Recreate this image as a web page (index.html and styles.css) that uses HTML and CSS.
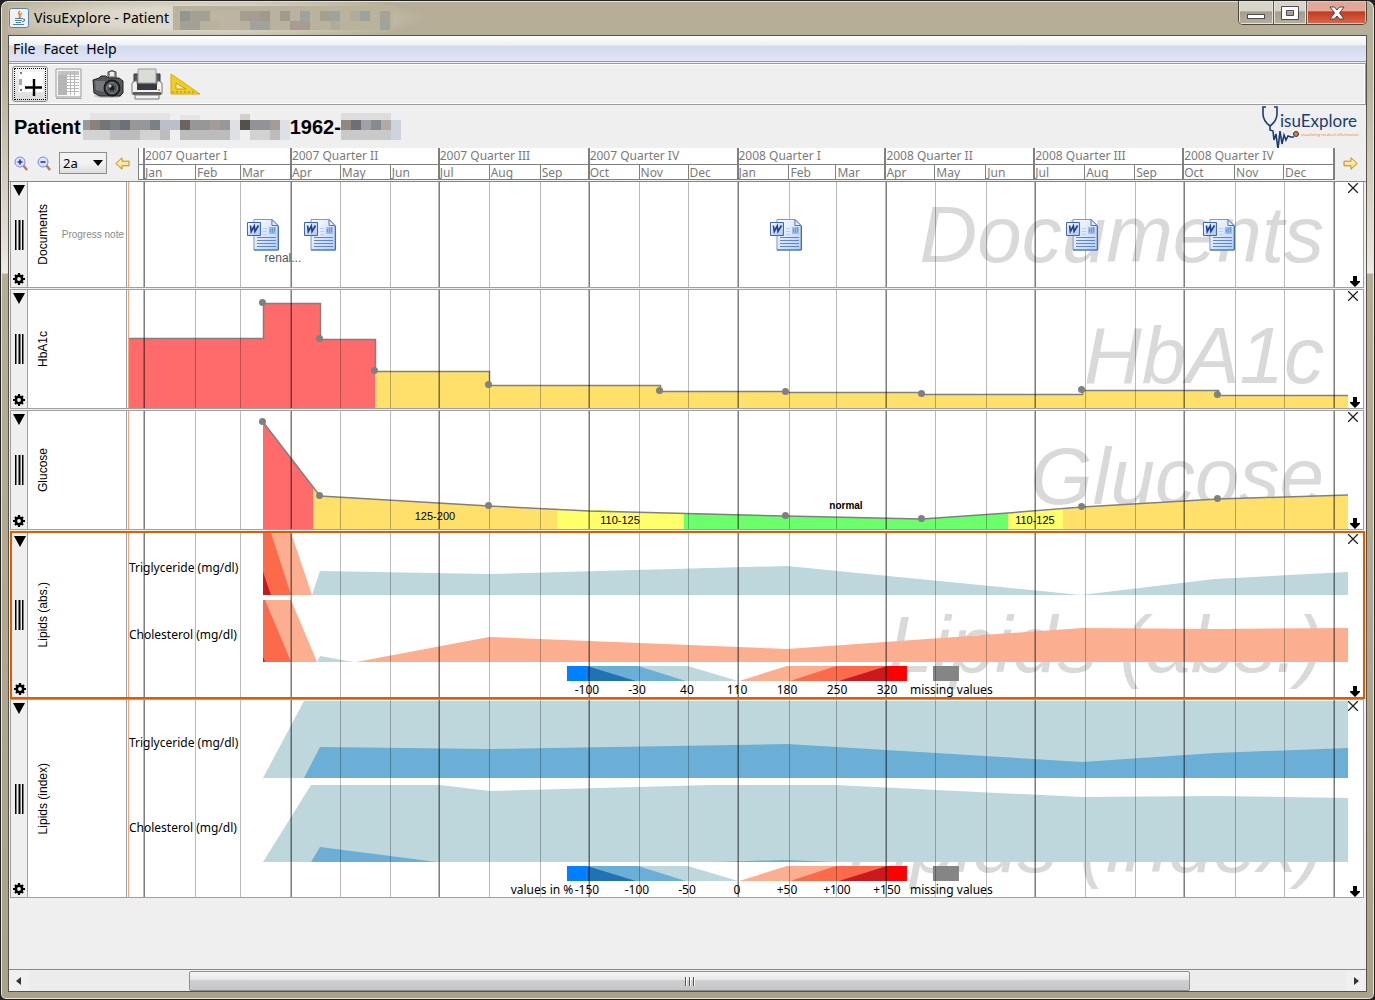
FILE: index.html
```html
<!DOCTYPE html>
<html lang="en">
<head>
<meta charset="utf-8">
<title>VisuExplore - Patient</title>
<link rel="stylesheet" href="styles.css">
</head>
<body>
<svg class="defs" aria-hidden="true">
  <defs>
    <linearGradient id="paper" x1="0" y1="0" x2="1" y2="1"><stop offset="0" stop-color="#fff"/><stop offset="1" stop-color="#b4cdf5"/></linearGradient>
    <linearGradient id="blueBox" x1="0" y1="0" x2="1" y2="1"><stop offset="0" stop-color="#fff"/><stop offset="1" stop-color="#a9c2f3"/></linearGradient>
    <linearGradient id="gold" x1="0" y1="0" x2="0" y2="1"><stop offset="0" stop-color="#fff6cf"/><stop offset="1" stop-color="#ffd86a"/></linearGradient>
    <g id="months" fill="#000">
      <path fill="#f4a77c" d="M128 0h1v1000h-1z"/>
      <path fill-opacity=".27" d="M195 0h1v1000h-1zM240 0h1v1000h-1zM340 0h1v1000h-1zM390 0h1v1000h-1zM489 0h1v1000h-1zM540 0h1v1000h-1zM639 0h1v1000h-1zM688 0h1v1000h-1zM789 0h1v1000h-1zM836 0h1v1000h-1zM935 0h1v1000h-1zM986 0h1v1000h-1zM1085 0h1v1000h-1zM1135 0h1v1000h-1zM1235 0h1v1000h-1zM1284 0h1v1000h-1zM143 0h1v1000h-1zM290 0h1v1000h-1zM438 0h1v1000h-1zM588 0h1v1000h-1zM737 0h1v1000h-1zM885 0h1v1000h-1zM1034 0h1v1000h-1zM1183 0h1v1000h-1zM1333 0h1v1000h-1z"/>
      <path fill-opacity=".5" d="M144 0h1v1000h-1zM291 0h1v1000h-1zM439 0h1v1000h-1zM589 0h1v1000h-1zM738 0h1v1000h-1zM886 0h1v1000h-1zM1035 0h1v1000h-1zM1184 0h1v1000h-1zM1334 0h1v1000h-1z"/>
    </g>
    <g id="worddoc">
      <path d="M7 .5h18l6 6v24.500H7z" fill="url(#paper)" stroke="#7d98cf"/>
      <path d="M25 .5v6h6z" fill="#e8f0ff" stroke="#4f73b8"/>
      <path d="M31.500 7v24H7" fill="none" stroke="#3f69b0"/>
      <path d="M10 18.500h19M10 21.500h19M10 24.500h19M10 27.500h19" stroke="#5f86cc"/>
      <path d="M16 9.500h4M16 12.500h4M16 15.500h4" stroke="#b9cdf0"/>
      <path d="M22 8h7v7h-7z" fill="#9dbbea"/><path d="M23.500 10v3M25.500 9v5M27.500 8v5" stroke="#6d95d6"/>
      <path d="M.5 3.500h13v13H.5z" fill="url(#blueBox)" stroke="#3a62c0"/>
      <path d="M3.500 6.500l.8 6L7.300 7l.7 5.500L11.500 6.500" fill="none" stroke="#1f4396" stroke-width="1.700"/>
    </g>
    <g id="legend">
      <path fill="#bdd7dc" d="M20 0h101l50 15H20z"/>
      <path fill="#6baed6" d="M20 0h51l48 15H20z"/>
      <path fill="#2171b5" d="M20 0l49 15H20z"/>
      <path fill="#0080ff" d="M0 0h20v15H0z"/>
      <path fill="#fcae91" d="M320 0H220l-48 15h148z"/>
      <path fill="#fb6a4a" d="M320 0h-51l-46 15h97z"/>
      <path fill="#cb181d" d="M320 0l-48 15h48z"/>
      <path fill="#f00" d="M320 0h20v15h-20z"/>
      <path fill="#858585" d="M366 0h26v15h-26z"/>
      <text x="343" y="28">missing values</text>
    </g>
    <symbol id="i-fold" viewBox="0 0 12 12"><path d="M0 1h12L6 12z"/></symbol>
    <symbol id="i-gear" viewBox="0 0 12 12"><circle cx="6" cy="6" r="3.200" fill="none" stroke="#000" stroke-width="2.600"/><path d="M6 0v3M6 9v3M0 6h3M9 6h3M2 2l2 2M10 2L8 4M2 10l2-2M10 10L8 8" stroke="#000" stroke-width="2.200"/></symbol>
    <symbol id="i-close" viewBox="0 0 10 10"><path d="M0 0l10 10M10 0L0 10" fill="none" stroke="#222" stroke-width="1.300"/></symbol>
    <symbol id="i-down" viewBox="0 0 12 12"><path d="M4 1h4v5h3v1L6 12 1 7V6h3z"/></symbol>
  </defs>
</svg>

<div class="window">
  <header class="titlebar">
    <svg class="java" width="20" height="20" viewBox="0 0 20 20" aria-hidden="true">
      <rect x=".5" y=".5" width="19" height="19" rx="2" fill="#eef2f5" stroke="#5f82a3"/>
      <path d="M11 3c-4 3 2 4-1 7M13 5c-3 2-2 2-2 5" fill="none" stroke="#e8762c" stroke-width="1.400"/>
      <path d="M6 10.500h8M6 12.500h7M7 14.500h5M4 16.500h11M14 11c3 0 1 3-1 3" fill="none" stroke="#5382a1" stroke-width="1.200"/>
    </svg>
    <h1>VisuExplore - Patient</h1>
    <svg class="mask" width="220" height="24" viewBox="0 0 220 24" aria-hidden="true">
      <path fill="#b9b29c" d="M0 0h220v24H0z"/>
      <path fill="#8f9790" d="M7 5h10v10H7z"/><path fill="#a5a096" d="M17 5h20v10H17zM7 15h20v9H7z"/><path fill="#bdb4a2" d="M37 5h30v10H37zM47 15h20v9H47z"/>
      <path fill="#a89c92" d="M67 5h20v10H67zM117 15h20v9h-20z"/><path fill="#a09a8a" d="M87 5h10v10H87zM107 5h10v10h-10z"/><path fill="#9ea39c" d="M127 5h10v10h-10zM157 5h10v10h-10zM77 15h20v9H77z"/>
      <path fill="#a3a18c" d="M147 5h10v10h-10z"/><path fill="#b2ab97" d="M177 5h20v10h-20zM157 15h10v9h-10z"/><path fill="#9ba59e" d="M187 5h10v10h-10zM207 15h10v9h-10z"/><path fill="#a6a294" d="M207 5h10v10h-10z"/>
    </svg>
    <div class="winbtns">
      <button class="wb" aria-label="Minimize"><svg width="18" height="6"><rect x=".5" y=".5" width="17" height="4" fill="#fff" stroke="#4a4a5a"/></svg></button>
      <button class="wb" aria-label="Maximize"><svg width="18" height="14"><path d="M.5.5h17v13H.5zM5.500 4.500v5h7v-5z" fill="#fff" fill-rule="evenodd" stroke="#4a4a5a"/></svg></button>
      <button class="wb wb-close" aria-label="Close"><svg width="16" height="14" viewBox="0 0 16 14"><path d="M1 1h4.500L8 4l2.500-3H15l-4.500 6 4.500 6h-4.500L8 10l-2.500 3H1l4.500-6z" fill="#fff" stroke="#5c3d40"/></svg></button>
    </div>
  </header>

  <main class="client">
    <nav class="menubar"><button>File</button><button>Facet</button><button>Help</button></nav>

    <div class="toolbar">
      <button class="tool focused" aria-label="Add facet"><svg width="32" height="32" viewBox="0 0 32 32"><path d="M5 4h24v20H5z" fill="#fff"/><path d="M6 4h2v2H6zM6 21h2v2H6z" fill="#777"/><path d="M5 11h3v6H5z" fill="#aaa"/><path d="M20 11v17M11 19.500h17" stroke="#000" stroke-width="2.400"/></svg></button>
      <button class="tool" aria-label="Table"><svg width="32" height="32" viewBox="0 0 32 32"><path d="M3 1h25v28H3z" fill="#f6f6f6" stroke="#999"/><path d="M5 3h21v24H5z" fill="#fff"/><path d="M5 5h8v22H5z" fill="#b4b4b4"/><path d="M5 3h21v4H5z" fill="#c4c4c4"/><path d="M5 8.500h21M5 11.500h21M5 14.500h21M5 17.500h21M5 20.500h21M5 23.500h21M9.500 3v24M13.500 3v24M17.500 3v24M21.500 3v24" stroke="#b8b8b8"/><path d="M3 30.500h26" stroke="#aaa"/></svg></button>
      <button class="tool" aria-label="Snapshot"><svg width="32" height="32" viewBox="0 0 32 32"><ellipse cx="16" cy="28" rx="14" ry="2" fill="#c4c4c4"/><path d="M16 4q4-3 8 0v7h-8z" fill="#999" stroke="#444"/><path d="M18 4h4v4h-4z" fill="#eee"/><path d="M1 12l6-2 2-2h5l2 2h11l4 3v12l-3 3H8l-6-3z" fill="#55585a" stroke="#222"/><path d="M3 13h10v11l-9-2z" fill="#747879"/><circle cx="20" cy="20" r="8" fill="#2b2d2f" stroke="#111"/><circle cx="20" cy="20" r="5.500" fill="#4c5257" stroke="#8b9093"/><circle cx="20" cy="20" r="2.500" fill="#1c1e20"/><circle cx="18" cy="18" r="1.500" fill="#c3ccd2"/></svg></button>
      <button class="tool" aria-label="Print"><svg width="32" height="32" viewBox="0 0 32 32"><path d="M3 6h26v10H3z" fill="#57595a" stroke="#333"/><path d="M7 1h18v14H7z" fill="#d9ddd6" stroke="#999"/><path d="M1 15l3-2h2v3h20v-3h2l3 2v11H1z" fill="#f3f3f3" stroke="#777"/><path d="M6 16h20v6H6z" fill="#363b3f"/><path d="M2 24h28v3H2z" fill="#5c5c5c"/><path d="M4 27h24v4H4z" fill="#f2f2f2" stroke="#777"/><path d="M27 21h2v2h-2z" fill="#f39a23"/></svg></button>
      <button class="tool" aria-label="Measure"><svg width="32" height="32" viewBox="0 0 32 32"><path d="M1 6v20h29z" fill="#f0cf22" stroke="#d2aa10"/><path d="M6 15v6h10z" fill="#f5efce" stroke="#c79d0c"/><path d="M3 25v-2M7 25v-2M11 25v-2M15 25v-2M19 25v-2M23 25v-2" stroke="#a98508"/></svg></button>
    </div>

    <div class="patient">
      <h2>Patient</h2>
      <svg class="redact" width="207" height="27" viewBox="0 0 207 27" aria-hidden="true">
        <path fill="#e4e4e4" d="M7 0h80v7H7zM97 2h20v5H97z"/><path fill="#d3d0cc" d="M157 1h10v6h-10z"/>
        <path fill="#999" d="M0 7h7v10H0z"/><path fill="#8c8179" d="M7 7h10v10H7z"/><path fill="#727475" d="M17 7h10v10H17z"/><path fill="#7b8083" d="M27 7h10v10H27zM67 7h10v10H67z"/><path fill="#6b7079" d="M37 7h10v10H37z"/><path fill="#979797" d="M47 7h20v10H47zM107 7h20v10h-20zM137 7h10v10h-10z"/><path fill="#bbbfca" d="M77 7h20v10H77z"/><path fill="#6c655f" d="M97 7h10v10H97z"/><path fill="#a59c95" d="M127 7h10v10h-10zM187 7h10v10h-10z"/><path fill="#55514a" d="M157 7h10v10h-10z"/><path fill="#909499" d="M167 7h20v10h-20z"/>
        <path fill="#d2d2d2" d="M0 17h27v10H0zM57 17h20v10H57zM167 17h20v10h-20z"/><path fill="#bcbcbc" d="M27 17h30v10H27zM77 17h10v10H77zM97 17h50v10H97zM187 17h10v10h-10z"/><path fill="#dde1e6" d="M197 7h10v20h-10zM147 7h10v20h-10z"/>
      </svg>
      <h2>1962-</h2>
      <svg class="redact second" width="60" height="27" viewBox="0 0 60 27" aria-hidden="true">
        <path fill="#ddd" d="M0 0h50v7H0z"/><path fill="#8f8780" d="M0 7h10v10H0z"/><path fill="#6c6f78" d="M10 7h10v10H10z"/><path fill="#a0a1a3" d="M20 7h10v10H20z"/><path fill="#868b90" d="M30 7h10v10H30z"/><path fill="#b3aaa5" d="M40 7h10v10H40z"/><path fill="#ced4de" d="M50 7h10v20H50z"/><path fill="#c9c9c9" d="M0 17h50v10H0z"/>
      </svg>
      <svg class="logo" width="100" height="44" viewBox="0 0 100 44" role="img" aria-label="VisuExplore">
        <path d="M6 2H3v7c0 6 3 9 7 12 4-3 7-6 7-12V2h-3M10 21v4l3 1 1 9 2-6 2 15 2-18 2 13 2-9 2 5 2-4 3 1h3" fill="none" stroke="#1b3d70" stroke-width="1.600"/>
        <circle cx="36" cy="29" r="2.500" fill="#f47920" stroke="#1b3d70"/>
        <text class="logo-name" x="20" y="22">isuExplore</text>
        <text class="logo-tag" x="41" y="31">visualizing medical information</text>
      </svg>
    </div>

    <div class="timebar">
      <div class="zoomtools">
        <button class="flat" aria-label="Zoom in"><svg width="14" height="15" viewBox="0 0 14 15"><path d="M9 9l4 5" stroke="#b07a5a" stroke-width="2.400"/><circle cx="6" cy="6" r="5" fill="#dbe4ff" stroke="#7d88ee"/><path d="M6 3.500v5M3.500 6h5" stroke="#223a9c" stroke-width="1.600"/></svg></button>
        <button class="flat" aria-label="Zoom out"><svg width="14" height="15" viewBox="0 0 14 15"><path d="M9 9l4 5" stroke="#b07a5a" stroke-width="2.400"/><circle cx="6" cy="6" r="5" fill="#dbe4ff" stroke="#7d88ee"/><path d="M3.500 6h5" stroke="#223a9c" stroke-width="1.600"/></svg></button>
        <span class="combo"><select aria-label="Time span"><option>2a</option></select><svg width="10" height="6" viewBox="0 0 10 6"><path d="M0 0h10L5 6z"/></svg></span>
        <button class="flat" aria-label="Earlier"><svg width="15" height="13" viewBox="0 0 15 13"><path d="M.8 6.500L7 .8v3.400h7v4.600H7v3.400z" fill="url(#gold)" stroke="#c08a1c"/></svg></button>
      </div>
      <div class="axis">
        <b>2007 Quarter I</b><b>2007 Quarter II</b><b>2007 Quarter III</b><b>2007 Quarter IV</b><b>2008 Quarter I</b><b>2008 Quarter II</b><b>2008 Quarter III</b><b>2008 Quarter IV</b>
        <i class="q">Jan</i><i>Feb</i><i>Mar</i><i class="q">Apr</i><i>May</i><i>Jun</i><i class="q">Jul</i><i>Aug</i><i>Sep</i><i class="q">Oct</i><i>Nov</i><i>Dec</i>
        <i class="q">Jan</i><i>Feb</i><i>Mar</i><i class="q">Apr</i><i>May</i><i>Jun</i><i class="q">Jul</i><i>Aug</i><i>Sep</i><i class="q">Oct</i><i>Nov</i><i>Dec</i>
      </div>
      <button class="flat later" aria-label="Later"><svg width="15" height="13" viewBox="0 0 15 13"><path d="M14.200 6.500L8 .8v3.400H1v4.600h7v3.400z" fill="url(#gold)" stroke="#c08a1c"/></svg></button>
    </div>

    <div class="facets">
      <section class="facet documents">
        <div class="handle"><button class="flat" aria-label="Collapse"><svg width="12" height="12"><use href="#i-fold"/></svg></button><span class="grip"></span><button class="flat" aria-label="Settings"><svg width="12" height="12"><use href="#i-gear"/></svg></button></div>
        <div class="caption"><h3>Documents</h3><span class="note">Progress note</span></div>
        <div class="plot">
          <span class="watermark">Documents</span>
          <svg class="chart">
            <svg viewBox="128 182 1220 105" preserveAspectRatio="none"><use href="#months"/></svg>
            <use href="#worddoc" x="9.750%" y="37"/><use href="#worddoc" x="14.430%" y="37"/><use href="#worddoc" x="52.620%" y="37"/><use href="#worddoc" x="76.890%" y="37"/><use href="#worddoc" x="88.110%" y="37"/>
            <text class="doc" x="12.700%" y="80">renal...</text>
          </svg>
        </div>
        <div class="side"><button class="flat" aria-label="Close facet"><svg width="10" height="10"><use href="#i-close"/></svg></button><button class="flat" aria-label="Move down"><svg width="12" height="12"><use href="#i-down"/></svg></button></div>
      </section>

      <section class="facet hba1c">
        <div class="handle"><button class="flat" aria-label="Collapse"><svg width="12" height="12"><use href="#i-fold"/></svg></button><span class="grip"></span><button class="flat" aria-label="Settings"><svg width="12" height="12"><use href="#i-gear"/></svg></button></div>
        <div class="caption"><h3>HbA1c</h3></div>
        <div class="plot">
          <span class="watermark">HbA1c</span>
          <svg class="chart">
            <svg viewBox="128 290 1220 118" preserveAspectRatio="none">
              <path fill="#ff6b6b" d="M128 338H263V303H321V339H375V408H128z"/>
              <path fill="#ffe06b" d="M375 371H489V385H660V391H786V392H922V394H1082V390H1218V395H1348V408H375z"/>
              <path class="curve" d="M128 338.500H263.500V303.500H320.500V339.500H375.500V371.500H489.500V385.500H660.500V391.500H786V392.500H922V394.500H1082.500V390.500H1218.500V395.500H1348"/>
              <use href="#months"/>
            </svg>
            <g class="dots"><circle cx="11.020%" cy="12.500" r="3.500"/><circle cx="15.700%" cy="48.500" r="3.500"/><circle cx="20.200%" cy="80.500" r="3.500"/><circle cx="29.550%" cy="94.500" r="3.500"/><circle cx="43.570%" cy="100.500" r="3.500"/><circle cx="53.890%" cy="101.500" r="3.500"/><circle cx="65.040%" cy="103.500" r="3.500"/><circle cx="78.160%" cy="99.500" r="3.500"/><circle cx="89.300%" cy="104.500" r="3.500"/></g>
          </svg>
        </div>
        <div class="side"><button class="flat" aria-label="Close facet"><svg width="10" height="10"><use href="#i-close"/></svg></button><button class="flat" aria-label="Move down"><svg width="12" height="12"><use href="#i-down"/></svg></button></div>
      </section>

      <section class="facet glucose">
        <div class="handle"><button class="flat" aria-label="Collapse"><svg width="12" height="12"><use href="#i-fold"/></svg></button><span class="grip"></span><button class="flat" aria-label="Settings"><svg width="12" height="12"><use href="#i-gear"/></svg></button></div>
        <div class="caption"><h3>Glucose</h3></div>
        <div class="plot">
          <span class="watermark">Glucose</span>
          <svg class="chart">
            <svg viewBox="128 411 1220 118" preserveAspectRatio="none">
              <path fill="#ff6b6b" d="M263 422L313 487V529H263z"/>
              <path fill="#ffe06b" d="M313 487L320 496 489 506 557 509V529H313zM1063 509L1082 507 1218 499 1348 495V529H1063z"/>
              <path fill="#ffff6b" d="M557 509L684 513V529H557zM1008 513L1063 509V529H1008z"/>
              <path fill="#6bff6b" d="M684 513L786 516 922 519 1008 513V529H684z"/>
              <path class="curve" d="M263 422L320 496 489 506 589 511 786 516 922 519 1008 513 1082 507 1218 499 1348 495"/>
              <use href="#months"/>
            </svg>
            <g class="dots"><circle cx="11.020%" cy="10.500" r="3.500"/><circle cx="15.700%" cy="84.500" r="3.500"/><circle cx="29.550%" cy="94.500" r="3.500"/><circle cx="53.890%" cy="104.500" r="3.500"/><circle cx="65.040%" cy="107.500" r="3.500"/><circle cx="78.160%" cy="95.500" r="3.500"/><circle cx="89.300%" cy="87.500" r="3.500"/></g>
            <g class="ranges"><text x="25.160%" y="109">125-200</text><text x="40.330%" y="113">110-125</text><text class="strong" x="58.850%" y="98">normal</text><text x="74.340%" y="113">110-125</text></g>
          </svg>
        </div>
        <div class="side"><button class="flat" aria-label="Close facet"><svg width="10" height="10"><use href="#i-close"/></svg></button><button class="flat" aria-label="Move down"><svg width="12" height="12"><use href="#i-down"/></svg></button></div>
      </section>

      <section class="facet lipids-abs selected">
        <div class="handle"><button class="flat" aria-label="Collapse"><svg width="12" height="12"><use href="#i-fold"/></svg></button><span class="grip"></span><button class="flat" aria-label="Settings"><svg width="12" height="12"><use href="#i-gear"/></svg></button></div>
        <div class="caption"><h3>Lipids (abs.)</h3></div>
        <div class="plot">
          <span class="watermark">Lipids (abs.)</span>
          <svg class="chart">
            <svg viewBox="128 533 1220 164" preserveAspectRatio="none">
              <path fill="#fcae91" d="M263 533H291L312 595H263zM263 600H291L317 662H263zM356 662L489 637 787 649 1082 628 1215 629 1348 628V662z"/>
              <path fill="#fb6a4a" d="M263 533H271L291 595H263zM263 600H265L291 662H263z"/>
              <path fill="#cb181d" d="M263 572L271 595H263zM263 657L265 662H263z"/>
              <path fill="#bdd7dc" d="M312 595L320 571 489 574 787 566 1081 595 1215 579 1348 572V595zM317 662L320 656 353 662z"/>
            </svg>
            <svg class="free" x="35.980%" y="133"><use href="#legend"/><g class="ticks"><text x="20" y="28">-100</text><text x="70" y="28">-30</text><text x="120" y="28">40</text><text x="170" y="28">110</text><text x="220" y="28">180</text><text x="270" y="28">250</text><text x="320" y="28">320</text></g></svg>
            <svg viewBox="128 533 1220 164" preserveAspectRatio="none"><use href="#months"/></svg>
            <text x="1" y="39">Triglyceride (mg/dl)</text><text x="1" y="106">Cholesterol (mg/dl)</text>
          </svg>
        </div>
        <div class="side"><button class="flat" aria-label="Close facet"><svg width="10" height="10"><use href="#i-close"/></svg></button><button class="flat" aria-label="Move down"><svg width="12" height="12"><use href="#i-down"/></svg></button></div>
      </section>

      <section class="facet lipids-index">
        <div class="handle"><button class="flat" aria-label="Collapse"><svg width="12" height="12"><use href="#i-fold"/></svg></button><span class="grip"></span><button class="flat" aria-label="Settings"><svg width="12" height="12"><use href="#i-gear"/></svg></button></div>
        <div class="caption"><h3>Lipids (index)</h3></div>
        <div class="plot">
          <span class="watermark">Lipids (index)</span>
          <svg class="chart">
            <svg viewBox="128 700 1220 197" preserveAspectRatio="none">
              <path fill="#bdd7dc" d="M263 778L304 701H1348V778zM263 862L311 785H440L490 791 710 785H835L1082 797 1215 796 1348 798V862z"/>
              <path fill="#6baed6" d="M304 778L320 747 489 749 787 744 1082 762 1215 753 1348 748V778zM311 862L320 847 437 862zM715 862L785 860 835 862z"/>
            </svg>
            <svg class="free" x="35.980%" y="166"><use href="#legend"/><g class="ticks"><text x="-25" y="28">values in %</text><text x="20" y="28">-150</text><text x="70" y="28">-100</text><text x="120" y="28">-50</text><text x="170" y="28">0</text><text x="220" y="28">+50</text><text x="270" y="28">+100</text><text x="320" y="28">+150</text></g></svg>
            <svg viewBox="128 700 1220 197" preserveAspectRatio="none"><use href="#months"/></svg>
            <text x="1" y="47">Triglyceride (mg/dl)</text><text x="1" y="132">Cholesterol (mg/dl)</text>
          </svg>
        </div>
        <div class="side"><button class="flat" aria-label="Close facet"><svg width="10" height="10"><use href="#i-close"/></svg></button><button class="flat" aria-label="Move down"><svg width="12" height="12"><use href="#i-down"/></svg></button></div>
      </section>
    </div>

    <div class="scrollbar">
      <button class="flat" aria-label="Scroll left"><svg width="6" height="8"><path d="M5 0v8L0 4z" fill="#333"/></svg></button>
      <div class="track"><div class="thumb"><svg width="12" height="9"><path d="M1.500 0v9M5.500 0v9M9.500 0v9" stroke="#555"/><path d="M2.500 0v9M6.500 0v9M10.500 0v9" stroke="#fff"/></svg></div></div>
      <button class="flat" aria-label="Scroll right"><svg width="6" height="8"><path d="M1 0v8l5-4z" fill="#333"/></svg></button>
    </div>
  </main>
</div>
</body>
</html>
```
FILE: styles.css
```css
* { box-sizing: border-box; }

body {
  margin: 0;
  background: #222;
  font-family: "Liberation Sans", Arial, sans-serif;
  color: #000;
}

h1, h2, h3 { margin: 0; font-weight: normal; }
svg { display: block; }
button { font: inherit; color: inherit; }

.defs { position: absolute; width: 0; height: 0; }

.flat {
  display: flex;
  align-items: center;
  justify-content: center;
  padding: 0;
  border: 0;
  background: none;
}

/* Window frame */
.window {
  display: flex;
  flex-direction: column;
  min-height: 100vh;
  padding: 0 7px 7px;
  border: 1px solid #222;
  border-radius: 8px 8px 6px 6px;
  box-shadow: inset 0 0 0 1px #e9e5d9;
  background: linear-gradient(#b5ad95 0, #b8b19c 80px, #e6e2d8 250px, #efece6 272px, #b5ad95 273px, #a9a189 100%);
}

.titlebar {
  display: flex;
  align-items: center;
  height: 34px;
  padding: 0 0 0 1px;
  background: radial-gradient(ellipse 240px 26px at 180px 17px, #dcd8cb 40%, transparent);
}
.titlebar h1 {
  margin-left: 5px;
  font: 14px/20px "Noto Sans", "Open Sans", sans-serif;
}
.mask { margin-left: 4px; }
.winbtns {
  display: flex;
  align-self: flex-start;
  height: 24px;
  margin-left: auto;
  border: 1px solid #4b473c;
  border-top: 0;
  border-radius: 0 0 5px 5px;
  overflow: hidden;
}
.wb {
  display: flex;
  align-items: center;
  justify-content: center;
  width: 35px;
  padding: 0;
  border: 0;
  border-right: 1px solid #5d584b;
  background: linear-gradient(#d8d4c8 0 45%, #a39c88 46%, #b6af9c);
  box-shadow: inset 0 0 0 1px #e6e3da;
}
.wb:first-child { align-items: flex-end; padding-bottom: 4px; }
.wb + .wb { width: 33px; }
.wb.wb-close {
  width: 59px;
  border-right: 0;
  background: linear-gradient(#e2a79b 0 45%, #c4391f 46%, #d76a4c);
  box-shadow: inset 0 0 0 1px #edc0b5;
}

.client {
  display: flex;
  flex: 1;
  flex-direction: column;
  border: 1px solid #55524a;
  background: #efefef;
}

/* Menu and tools */
.menubar {
  display: flex;
  gap: 8px;
  height: 26px;
  padding-left: 4px;
  border-bottom: 1px solid #9a9a9a;
  background: linear-gradient(#fff, #eef1f8 9px, #d3daed 10px, #e0e6f5);
}
.menubar button {
  padding: 0;
  border: 0;
  background: none;
  font: 14px/24px "Noto Sans", "Open Sans", sans-serif;
}
.toolbar {
  display: flex;
  gap: 3px;
  align-items: center;
  height: 42px;
  margin-top: 1px;
  padding-left: 3px;
  border: 1px solid #9a9a9a;
  border-width: 1px 1px 1px 0;
  box-shadow: inset 0 0 0 1px #fff;
}
.tool {
  display: grid;
  place-items: center;
  width: 36px;
  height: 36px;
  padding: 0;
  border: 1px solid transparent;
  background: none;
}
.tool.focused {
  border-color: #8e8f8f;
  border-radius: 3px;
  background: linear-gradient(#f4f4f4, #dcdcdc);
  outline: 1px dotted #000;
  outline-offset: -3px;
}

.patient {
  display: flex;
  align-items: center;
  height: 43px;
  padding: 0 6px 0 5px;
}
.patient h2 { font: bold 20px/24px "Liberation Sans", Arial, sans-serif; }
.redact { margin-left: 2px; }
.redact.second { margin-left: 0; }
.logo { margin-left: auto; }
.logo-name { font: 17px Lato, sans-serif; fill: #1b3d70; }
.logo-tag { font: 4px "Open Sans", sans-serif; fill: #f47920; }

/* Time axis */
.timebar {
  display: flex;
  height: 33px;
  padding-left: 1px;
}
.zoomtools {
  display: flex;
  align-items: center;
  gap: 9px;
  width: 128px;
  padding: 0 0 3px 4px;
}
.combo {
  display: grid;
  align-items: center;
  justify-items: end;
  width: 48px;
  margin: 0 -1px;
}
.combo select, .combo svg { grid-area: 1 / 1; }
.combo svg { margin-right: 4px; pointer-events: none; }
.combo select {
  width: 100%;
  height: 22px;
  padding: 0 3px;
  border: 1px solid #8e8f8f;
  appearance: none;
  background: linear-gradient(#f2f2f2 50%, #dedede);
  color: #000;
  font: 13px "Noto Sans", "Open Sans", sans-serif;
}
.axis {
  display: grid;
  flex: 1;
  grid-template-columns: 51fr 45fr 51fr 49fr 50fr 49fr 50fr 51fr 49fr 50fr 49fr 50fr 51fr 47fr 50fr 49fr 51fr 49fr 50fr 50fr 49fr 51fr 49fr 50fr;
  grid-template-rows: 17px 15px;
  height: 32px;
  padding-left: 5px;
  border: 1px solid #808080;
  border-width: 0 2px 1px 1px;
  background: linear-gradient(#808080, #808080) 0 16px / 100% 1px no-repeat #fff;
  color: #7a7a7a;
  font: 12px/16px "Noto Sans", Tahoma, sans-serif;
}
.axis b, .axis i {
  min-width: 0;
  padding-left: 1px;
  border-left: 1px solid #808080;
  font-style: normal;
  font-weight: normal;
  white-space: nowrap;
}
.axis b { grid-column: span 3; margin-left: -1px; padding-left: 0; border-left-width: 2px; }
.axis i.q { margin-left: -1px; padding-left: 0; border-left-width: 2px; }
.later { width: 31px; padding-bottom: 3px; }

/* Facets */
.facets {
  flex: 1;
  display: flex;
  flex-direction: column;
  gap: 1px;
  padding: 0 2px 0 1px;
  border-top: 1px solid #84878f;
  border-bottom: 1px solid #84878f;
}
.facet {
  display: grid;
  grid-template-columns: 17px 100px 1fr 15px;
  border: 1px solid #a0a0a0;
  background: #fff;
}
.documents { height: 106px; border-top: 0; }
.hba1c, .glucose { height: 120px; }
.lipids-abs { height: 168px; }
.lipids-index { height: 199px; margin-top: -1px; }
.facet.selected {
  grid-template-columns: 16px 100px 1fr 15px;
  margin-right: -1px;
  border: 2px solid #e05c00;
}
.handle {
  display: flex;
  flex-direction: column;
  align-items: center;
  justify-content: space-between;
  padding: 2px 0;
  border-right: 1px solid #a0a0a0;
  background: #efefef;
}
.grip {
  width: 9px;
  height: 30px;
  background: linear-gradient(90deg, #000 0 1px, #777 1px 2px, #efefef 2px 3px, #777 3px 4px, #000 4px 5px, #777 5px 6px, #efefef 6px 7px, #000 7px 8px, #777 8px);
}
.caption {
  display: flex;
  align-items: center;
  justify-content: space-between;
  margin-right: 1px;
  padding: 0 2px 0 8px;
  border-right: 1px solid #a0a0a0;
}
.caption h3 {
  writing-mode: vertical-rl;
  transform: rotate(180deg);
  font: 12px/14px "Liberation Sans", Arial, sans-serif;
  white-space: nowrap;
}
.note { color: #8a8a8a; font: 10px "Liberation Sans", Arial, sans-serif; }
.plot { position: relative; min-width: 0; overflow: hidden; }
.watermark {
  position: absolute;
  right: 24px;
  bottom: 6px;
  color: #d9d9d9;
  font: italic 80px/92px "Liberation Sans", Arial, sans-serif;
  white-space: nowrap;
}
.chart {
  position: relative;
  width: 100%;
  height: 100%;
  font: 12px "Noto Sans", Tahoma, sans-serif;
}
.free { overflow: visible; }
.curve { fill: none; stroke: #808080; stroke-width: 1.5; vector-effect: non-scaling-stroke; }
.dots { fill: #808080; }
.ticks, .ranges, .doc { text-anchor: middle; }
.ranges { font: 11px "Liberation Sans", Arial, sans-serif; }
.strong { font-weight: bold; font-size: 10px; }
.doc { fill: #555; font: 12px "Liberation Sans", Arial, sans-serif; }
.side {
  display: flex;
  flex-direction: column;
  align-items: flex-end;
  justify-content: space-between;
  padding: 1px 2px 0 0;
}
.side .flat:first-child { align-self: flex-start; }

/* Scroll bar */
.scrollbar {
  display: flex;
  height: 21px;
  padding-top: 1px;
  background: #f0f0f0;
}
.scrollbar > .flat { width: 20px; }
.track {
  display: grid;
  flex: 1;
  grid-template-columns: 160fr 1001fr 156fr;
  background: #ececec;
}
.thumb {
  display: grid;
  grid-column: 2;
  place-items: center;
  height: 20px;
  border: 1px solid #8e9093;
  border-radius: 2px;
  background: linear-gradient(#f5f5f5, #e6e6e8 45%, #d0d0d3 46%, #c6c6c9);
}
```
